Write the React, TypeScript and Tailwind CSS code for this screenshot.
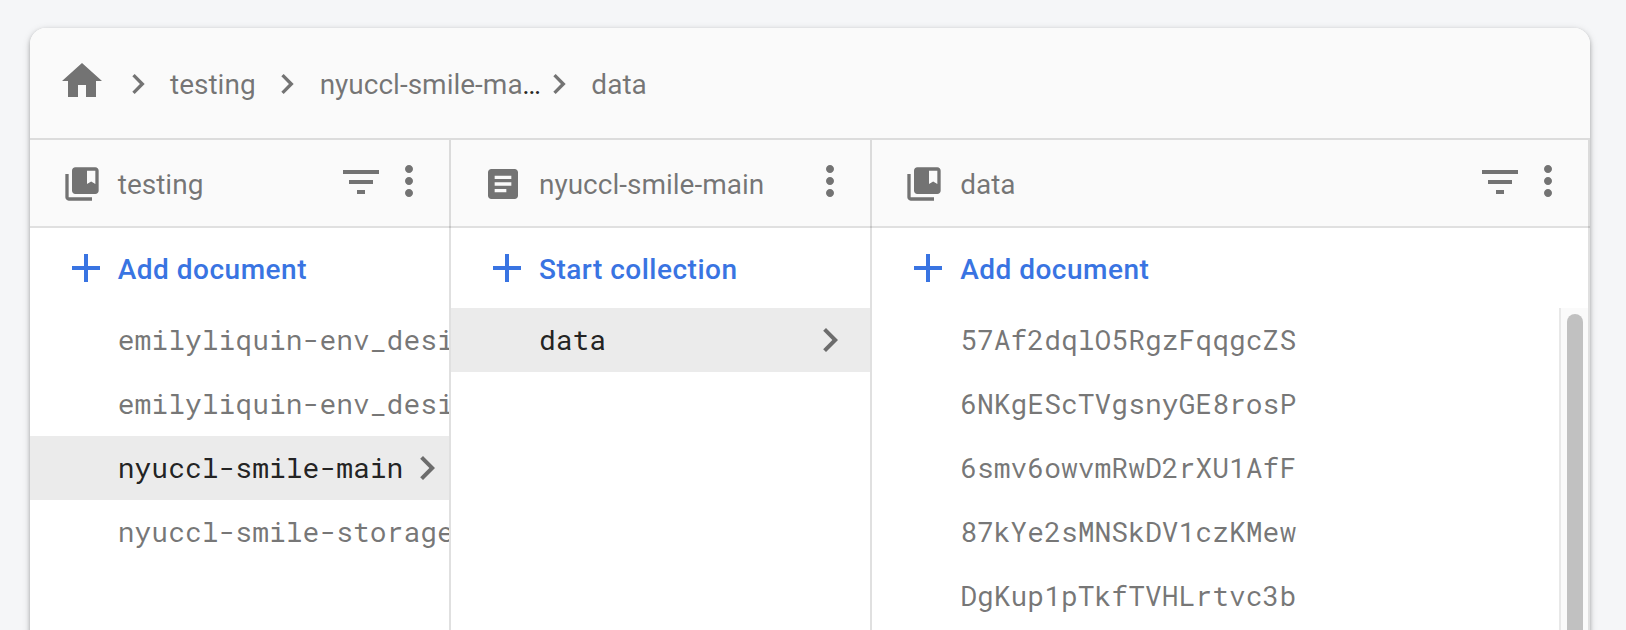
import React from "react";

const ICONS = {
  home: "M10 20v-6h4v6h5v-8h3L12 3 2 12h3v8z",
  chevron: "M10 6L8.59 7.41 13.17 12l-4.58 4.59L10 18l6-6z",
  collection:
    "M4 6H2v14c0 1.1.9 2 2 2h14v-2H4V6zm16-4H8c-1.1 0-2 .9-2 2v12c0 1.1.9 2 2 2h12c1.1 0 2-.9 2-2V4c0-1.1-.9-2-2-2zm0 10l-2.5-1.5L15 12V4h5v8z",
  document:
    "M19 3H5c-1.1 0-2 .9-2 2v14c0 1.1.9 2 2 2h14c1.1 0 2-.9 2-2V5c0-1.1-.9-2-2-2zm-5 14H7v-2h7v2zm3-4H7v-2h10v2zm0-4H7V7h10v2z",
  filter: "M10 18h4v-2h-4v2zM3 6v2h18V6H3zm3 7h12v-2H6v2z",
  more: "M12 8c1.1 0 2-.9 2-2s-.9-2-2-2-2 .9-2 2 .9 2 2 2zm0 2c-1.1 0-2 .9-2 2s.9 2 2 2 2-.9 2-2-.9-2-2-2zm0 6c-1.1 0-2 .9-2 2s.9 2 2 2 2-.9 2-2-.9-2-2-2z",
  add: "M19 13h-6v6h-2v-6H5v-2h6V5h2v6h6v2z",
};

function Icon({ name, className }: { name: keyof typeof ICONS; className: string }) {
  return (
    <svg viewBox="0 0 24 24" fill="currentColor" className={`shrink-0 ${className}`}>
      <path d={ICONS[name]} />
    </svg>
  );
}

type Item = { id: string; selected?: boolean };

type ColumnProps = {
  icon: "collection" | "document";
  title: string;
  action: string;
  items: Item[];
  filter?: boolean;
  scroll?: boolean;
  className: string;
};

function Column({ icon, title, action, items, filter, scroll, className }: ColumnProps) {
  return (
    <section
      className={`relative flex flex-col bg-white after:absolute after:inset-y-0 after:right-0 after:w-0.5 after:bg-black/12 ${className}`}
    >
      <header className="flex h-[88px] shrink-0 items-center border-b-2 border-black/12 bg-[#fafafa] bg-clip-padding pl-[31.75px] pr-[18px] text-black/54">
        <Icon name={icon} className="size-10 mt-[2px]" />
        <h2 className="ml-4 mt-[3px] flex-1 whitespace-nowrap">{title}</h2>
        {filter && <Icon name="filter" className="size-12 -mt-[2px]" />}
        <Icon name="more" className="size-12 -mt-[4px]" />
      </header>
      <button className="flex h-20 shrink-0 items-center gap-2 pl-[31.75px] font-medium tracking-[0.5px] text-[#3974e2]">
        <Icon name="add" className="size-12" />
        <span className="mt-[3px]">{action}</span>
      </button>
      <div className="mr-0.5 flex min-h-0 flex-1 overflow-hidden">
        <ul className="min-w-0 flex-1 font-['Roboto_Mono','Liberation_Mono',monospace]">
          {items.map((item, i) => (
            <li
              key={i}
              className={`flex h-16 items-center overflow-hidden whitespace-nowrap pl-[87.75px] ${
                item.selected ? "bg-[#ebebeb] text-black/87" : "text-black/54"
              }`}
            >
              <span>{item.id}</span>
              {item.selected && (
                <Icon
                  name="chevron"
                  className={`size-12 text-black/54 ${icon === "document" ? "ml-auto mr-4" : "-ml-[0.5px]"}`}
                />
              )}
            </li>
          ))}
        </ul>
        {scroll && (
          <div className="w-[29px] border-l-2 border-[#e8e8e8] bg-[#fafafa] pl-1.5 pt-1.5">
            <div className="h-[600px] w-4 rounded-t-full bg-[#c1c1c1]" />
          </div>
        )}
      </div>
    </section>
  );
}

export default function App() {
  return (
    <main className="h-[630px] overflow-hidden bg-[#f5f6f8] px-[30px] pr-9 pt-7 font-['Roboto',sans-serif] text-[28px] leading-10">
      <div className="flex h-[700px] flex-col overflow-hidden rounded-2xl bg-white shadow-[0_2px_4px_rgba(0,0,0,0.26),0_2px_8px_rgba(0,0,0,0.14)]">
        <nav className="flex h-28 shrink-0 items-center border-b-2 border-[#dcdcdc] bg-[#fafafa] pl-7 text-black/54">
          <Icon name="home" className="size-12 -mt-1" />
          <Icon name="chevron" className="ml-3 mt-[2px] size-10" />
          <span className="ml-3 mt-[3px]">testing</span>
          <Icon name="chevron" className="ml-[11px] mt-[2px] size-10" />
          <span className="ml-[13px] mt-[3px]">
            nyuccl-smile-ma<span className="-ml-[0.5px] text-black/87">…</span>
          </span>
          <Icon name="chevron" className="-ml-[1.5px] mt-[2px] size-10" />
          <span className="ml-3 mt-[3px]">data</span>
        </nav>
        <div className="flex min-h-0 flex-1">
          <Column
            className="w-[27%]"
            icon="collection"
            title="testing"
            action="Add document"
            filter
            items={[
              { id: "emilyliquin-env_design" },
              { id: "emilyliquin-env_design" },
              { id: "nyuccl-smile-main", selected: true },
              { id: "nyuccl-smile-storage" },
            ]}
          />
          <Column
            className="w-[27%]"
            icon="document"
            title="nyuccl-smile-main"
            action="Start collection"
            items={[{ id: "data", selected: true }]}
          />
          <Column
            className="w-[46%]"
            icon="collection"
            title="data"
            action="Add document"
            filter
            scroll
            items={[
              { id: "57Af2dqlO5RgzFqqgcZS" },
              { id: "6NKgEScTVgsnyGE8rosP" },
              { id: "6smv6owvmRwD2rXU1AfF" },
              { id: "87kYe2sMNSkDV1czKMew" },
              { id: "DgKup1pTkfTVHLrtvc3b" },
            ]}
          />
        </div>
      </div>
    </main>
  );
}
